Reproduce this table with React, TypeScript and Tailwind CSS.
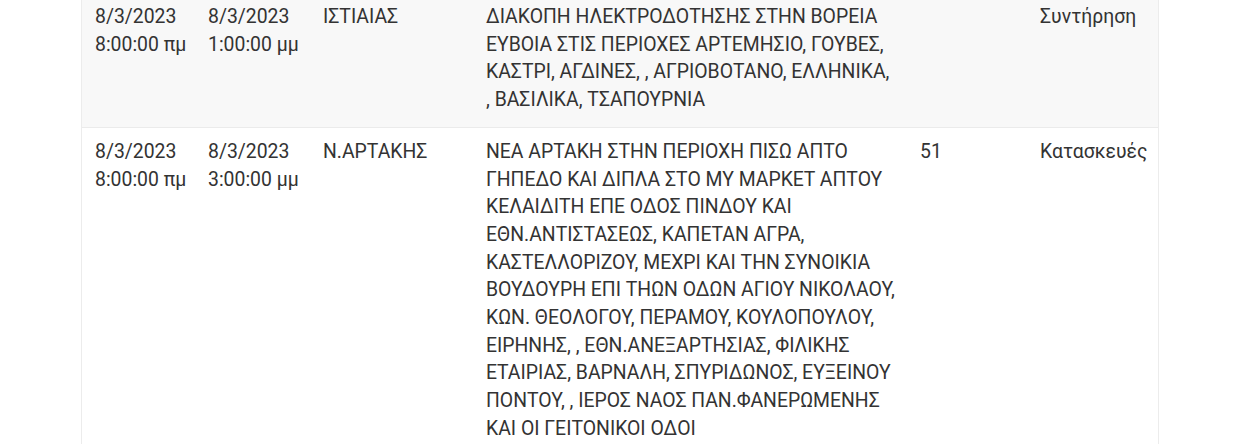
const rows = [
  {
    start: ["8/3/2023", "8:00:00 πμ"],
    end: ["8/3/2023", "1:00:00 μμ"],
    area: "ΙΣΤΙΑΙΑΣ",
    desc: "ΔΙΑΚΟΠΗ ΗΛΕΚΤΡΟΔΟΤΗΣΗΣ ΣΤΗΝ ΒΟΡΕΙΑ ΕΥΒΟΙΑ ΣΤΙΣ ΠΕΡΙΟΧΕΣ ΑΡΤΕΜΗΣΙΟ, ΓΟΥΒΕΣ, ΚΑΣΤΡΙ, ΑΓΔΙΝΕΣ, , ΑΓΡΙΟΒΟΤΑΝΟ, ΕΛΛΗΝΙΚΑ, , ΒΑΣΙΛΙΚΑ, ΤΣΑΠΟΥΡΝΙΑ",
    code: "",
    kind: "Συντήρηση",
  },
  {
    start: ["8/3/2023", "8:00:00 πμ"],
    end: ["8/3/2023", "3:00:00 μμ"],
    area: "Ν.ΑΡΤΑΚΗΣ",
    desc: "ΝΕΑ ΑΡΤΑΚΗ ΣΤΗΝ ΠΕΡΙΟΧΗ ΠΙΣΩ ΑΠΤΟ ΓΗΠΕΔΟ ΚΑΙ ΔΙΠΛΑ ΣΤΟ ΜΥ ΜΑΡΚΕΤ ΑΠΤΟΥ ΚΕΛΑΙΔΙΤΗ ΕΠΕ ΟΔΟΣ ΠΙΝΔΟΥ ΚΑΙ ΕΘΝ.ΑΝΤΙΣΤΑΣΕΩΣ, ΚΑΠΕΤΑΝ ΑΓΡΑ, ΚΑΣΤΕΛΛΟΡΙΖΟΥ, ΜΕΧΡΙ ΚΑΙ ΤΗΝ ΣΥΝΟΙΚΙΑ ΒΟΥΔΟΥΡΗ ΕΠΙ ΤΗΩΝ ΟΔΩΝ ΑΓΙΟΥ ΝΙΚΟΛΑΟΥ, ΚΩΝ. ΘΕΟΛΟΓΟΥ, ΠΕΡΑΜΟΥ, ΚΟΥΛΟΠΟΥΛΟΥ, ΕΙΡΗΝΗΣ, , ΕΘΝ.ΑΝΕΞΑΡΤΗΣΙΑΣ, ΦΙΛΙΚΗΣ ΕΤΑΙΡΙΑΣ, ΒΑΡΝΑΛΗ, ΣΠΥΡΙΔΩΝΟΣ, ΕΥΞΕΙΝΟΥ ΠΟΝΤΟΥ, , ΙΕΡΟΣ ΝΑΟΣ ΠΑΝ.ΦΑΝΕΡΩΜΕΝΗΣ ΚΑΙ ΟΙ ΓΕΙΤΟΝΙΚΟΙ ΟΔΟΙ",
    code: "",
    kind: "Κατασκευές",
  },
];

rows[1].code = "51";

const App = () => {
  return (
    <div className="h-[444px] overflow-hidden bg-white font-['Roboto','Noto_Sans',sans-serif] text-[19.4px] leading-[27.7px] text-[#333]">
      <div className="-mt-[7px] ml-[81px] w-[1078px] border-x border-[#ececec]">
        <table className="w-full table-fixed border-collapse">
          <colgroup>
            <col className="w-[114px]" />
            <col className="w-[115px]" />
            <col className="w-[163px]" />
            <col className="w-[434px]" />
            <col className="w-[120px]" />
            <col className="w-[130px]" />
          </colgroup>
          <tbody>
            {rows.map((row, i) => (
              <tr
                key={i}
                className={i % 2 === 0 ? "bg-[#f8f8f8] border-b border-[#ebebeb]" : "bg-white"}
              >
                <td className="whitespace-nowrap pl-[13px] pr-[4px] pt-[10px] pb-[13px] align-top">
                  {row.start[0]}
                  <br />
                  {row.start[1]}
                </td>
                <td className="whitespace-nowrap pl-[12px] pr-[4px] pt-[10px] pb-[13px] align-top">
                  {row.end[0]}
                  <br />
                  {row.end[1]}
                </td>
                <td className="px-[12px] pt-[10px] pb-[13px] align-top">{row.area}</td>
                <td className="px-[12px] pt-[10px] pb-[13px] align-top">{row.desc}</td>
                <td className="px-[12px] pt-[10px] pb-[13px] align-top">{row.code}</td>
                <td className="whitespace-nowrap px-[12px] pt-[10px] pb-[13px] align-top">{row.kind}</td>
              </tr>
            ))}
          </tbody>
        </table>
      </div>
    </div>
  );
};

export default App;
